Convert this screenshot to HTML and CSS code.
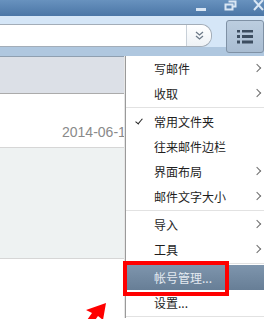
FILE: index.html
```html
<!DOCTYPE html>
<html lang="zh-CN">
<head>
<meta charset="UTF-8">
<title>邮件</title>
<link rel="stylesheet" href="styles.css">
</head>
<body>
<div class="window">
  <div class="titlebar">
    <svg class="ctl ctl-min" width="10" height="16" viewBox="0 0 10 16"><rect x="0" y="8" width="10" height="3" fill="#d9e6f4"/></svg>
    <svg class="ctl ctl-max" width="13" height="16" viewBox="0 0 13 16"><path d="M4.5 1.5h7v5h-2M1.5 4.5h7v5h-7z" fill="none" stroke="#d9e6f4" stroke-width="2"/></svg>
    <svg class="ctl ctl-close" width="11" height="16" viewBox="0 0 11 16"><path d="M1 0l9 10M10 0l-9 10" stroke="#d9e6f4" stroke-width="2"/></svg>
  </div>

  <div class="toolbar">
    <div class="address">
      <div class="address-drop">
        <svg width="9" height="9" viewBox="0 0 9 9"><path d="M1 1l3.5 3 3.5-3M1 5l3.5 3 3.5-3" fill="none" stroke="#6d7a88" stroke-width="1.3"/></svg>
      </div>
    </div>
    <div class="menu-btn">
      <svg width="16" height="14" viewBox="0 0 16 14"><path d="M0 1h3M5 1h11M0 6.5h3M5 6.5h11M0 12h3M5 12h11" stroke="#3c4d60" stroke-width="3"/></svg>
    </div>
  </div>
  <div class="band"></div>

  <div class="list">
    <div class="row row-selected"></div>
    <div class="row row-mail"><span class="date">2014-06-18</span></div>
    <div class="row row-preview"></div>
    <div class="row"></div>
  </div>

  <div class="menu">
    <div class="item">写邮件<span class="more"></span></div>
    <div class="item">收取<span class="more"></span></div>
    <div class="sep"></div>
    <div class="item checked">常用文件夹</div>
    <div class="item">往来邮件边栏</div>
    <div class="item">界面布局<span class="more"></span></div>
    <div class="item">邮件文字大小<span class="more"></span></div>
    <div class="sep"></div>
    <div class="item">导入<span class="more"></span></div>
    <div class="item">工具<span class="more"></span></div>
    <div class="sep"></div>
    <div class="item active">帐号管理...</div>
    <div class="item">设置...</div>
    <div class="sep"></div>
  </div>

  <div class="mark"></div>
  <svg class="arrow" width="40" height="30" viewBox="0 0 40 30"><path d="M34 3L14 10l6 3-12 17h8l10-14 5 4z" fill="#f00"/></svg>
</div>
</body>
</html>
```

FILE: styles.css
```css
body {
  margin: 0;
  font-family: "Noto Sans CJK SC", "Liberation Sans", sans-serif;
  background: #fff;
}
.window {
  position: relative;
  width: 264px;
  height: 319px;
  overflow: hidden;
}
.titlebar {
  height: 16px;
  display: flex;
  justify-content: flex-end;
  background: linear-gradient(#6892be, #4b76a6);
}
.ctl { display: block; }
.ctl-min { margin-right: 18px; }
.ctl-max { margin-right: 16px; }
.ctl-close { margin-right: 0; }

.toolbar {
  height: 31px;
  display: flex;
  align-items: flex-start;
  background: #d5e6f7;
}
.address {
  box-sizing: border-box;
  width: 216px;
  height: 23px;
  margin-top: 8px;
  display: flex;
  justify-content: flex-end;
  background: #fff;
  border: 1px solid #a3adb8;
  border-left: none;
  border-radius: 0 11px 11px 0;
}
.address-drop {
  width: 24px;
  display: flex;
  align-items: center;
  justify-content: center;
  border-left: 1px solid #c8d0d8;
  background: linear-gradient(#ffffff, #eef2f6);
  border-radius: 0 10px 10px 0;
}
.menu-btn {
  box-sizing: border-box;
  width: 38px;
  height: 33px;
  margin: 4px 0 0 14px;
  display: flex;
  align-items: center;
  padding-left: 10px;
  border: 1px solid #7f91a5;
  border-radius: 3px;
  background: linear-gradient(#bccddf, #a9bdd2);
  position: relative;
  z-index: 1;
}
.band {
  height: 9px;
  background: #afc7df;
  border-bottom: 1px solid #8f9fb0;
}

.row {
  height: 36px;
}
.row-selected {
  background: #dce0e7;
  border-bottom: 1px solid #ababab;
}
.row-mail {
  height: 53px;
  border-bottom: 1px solid #d6d6d6;
  padding-left: 62px;
}
.date {
  display: inline-block;
  margin-top: 30px;
  font-family: "Liberation Sans", sans-serif;
  font-size: 14px;
  color: #8a8a8a;
}
.row-preview {
  height: 110px;
  background: #eef2f2;
  border-bottom: 1px solid #d6d6d6;
}

.menu {
  position: absolute;
  left: 125px;
  top: 56px;
  width: 145px;
  background: #fff;
  border-left: 1px solid #9a9a9a;
  box-shadow: -1px 0 0 #e6e6e6;
}
.item {
  position: relative;
  height: 25px;
  line-height: 25px;
  padding-left: 28px;
  font-size: 12px;
  color: #1e1e1e;
}
.more {
  position: absolute;
  right: 11px;
  top: 9px;
  width: 5px;
  height: 5px;
  border-top: 1.5px solid #6e6e6e;
  border-right: 1.5px solid #6e6e6e;
  transform: rotate(45deg);
}
.checked::before {
  content: "";
  position: absolute;
  left: 11px;
  top: 8px;
  width: 3px;
  height: 6px;
  border-right: 1.5px solid #222;
  border-bottom: 1.5px solid #222;
  transform: rotate(40deg);
}
.sep {
  height: 1px;
  margin: 1px 0;
  background: #e2e2e2;
}
.active {
  background: linear-gradient(#7e95ad, #677e96);
  color: #e4eaf1;
}

.mark {
  position: absolute;
  left: 123px;
  top: 261px;
  width: 106px;
  height: 35px;
  box-sizing: border-box;
  border: 4px solid #f00;
}
.arrow {
  position: absolute;
  left: 72px;
  top: 300px;
}
```
